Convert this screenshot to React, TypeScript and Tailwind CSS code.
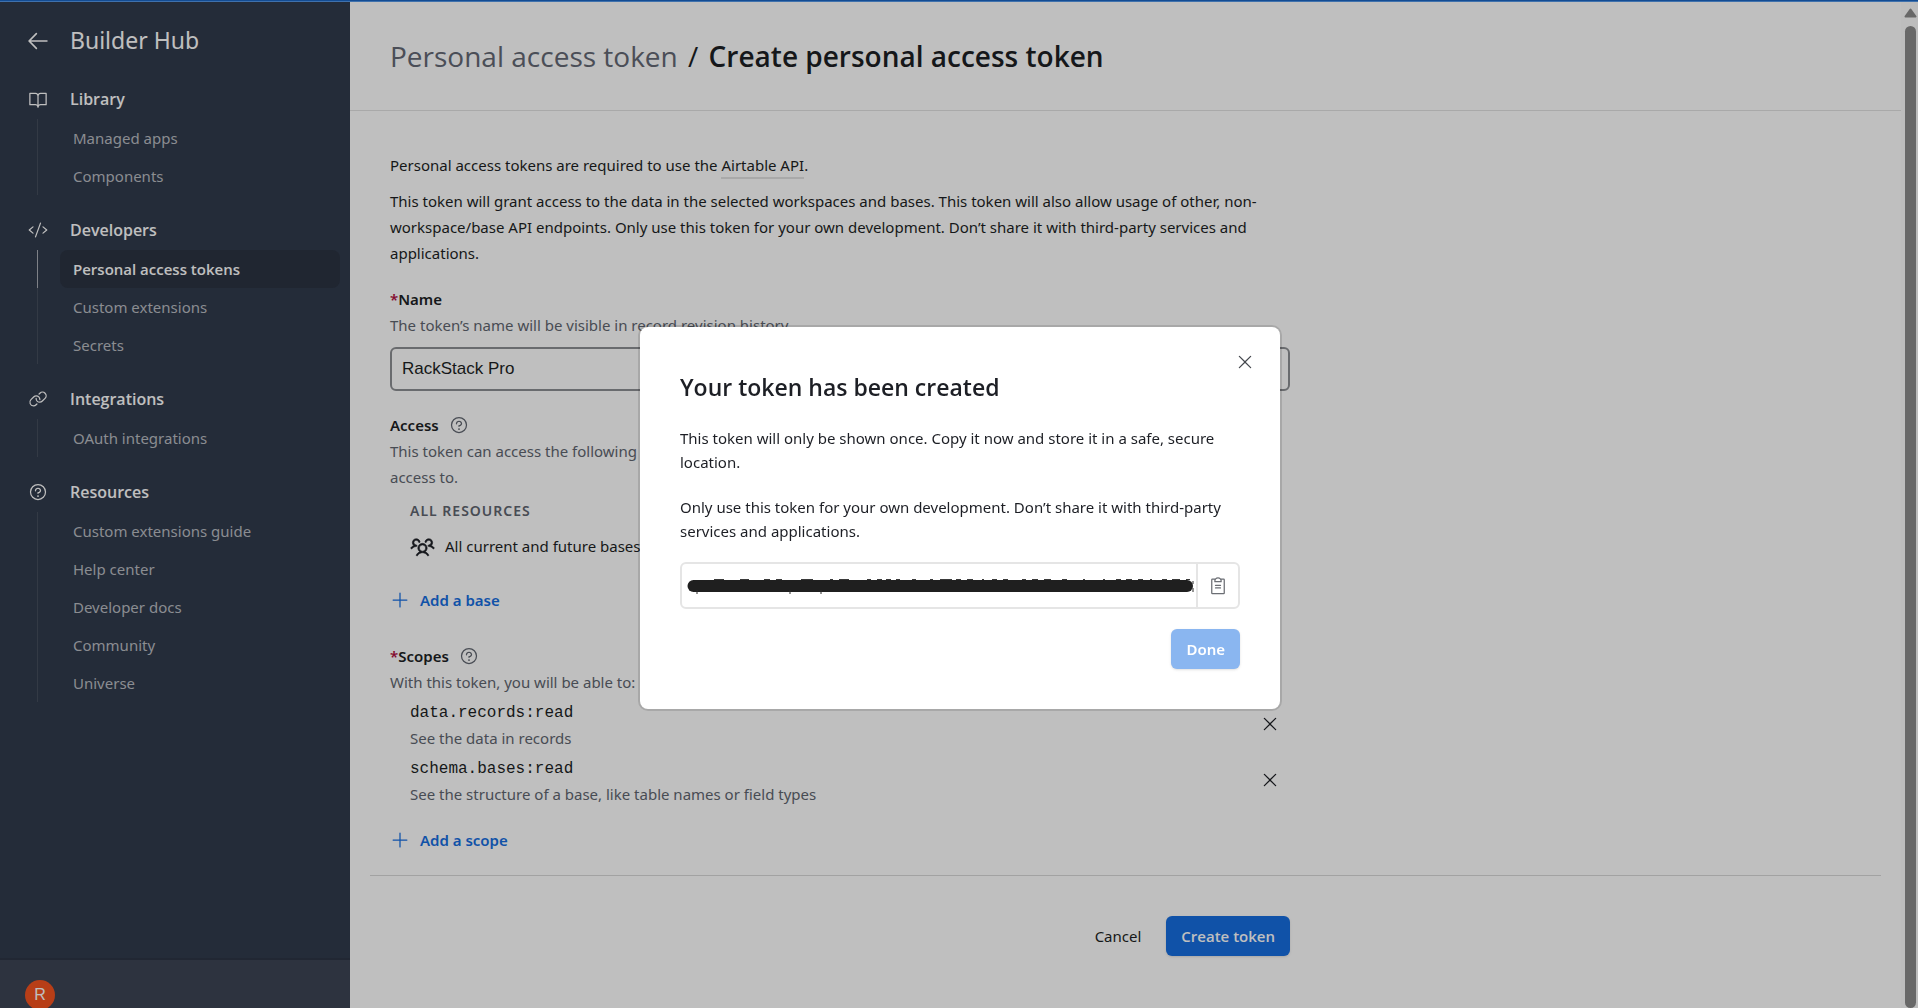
import type { ComponentType, ReactNode } from "react";
import {
  PiArrowLeft,
  PiBookOpen,
  PiClipboardText,
  PiCode,
  PiLink,
  PiPlus,
  PiQuestion,
  PiUsersThree,
  PiX,
} from "react-icons/pi";

type Icon = ComponentType<{ className?: string }>;

type Section = {
  title: string;
  icon: Icon;
  items: { label: string; active?: boolean }[];
};

const sections: Section[] = [
  {
    title: "Library",
    icon: PiBookOpen,
    items: [{ label: "Managed apps" }, { label: "Components" }],
  },
  {
    title: "Developers",
    icon: PiCode,
    items: [
      { label: "Personal access tokens", active: true },
      { label: "Custom extensions" },
      { label: "Secrets" },
    ],
  },
  {
    title: "Integrations",
    icon: PiLink,
    items: [{ label: "OAuth integrations" }],
  },
  {
    title: "Resources",
    icon: PiQuestion,
    items: [
      { label: "Custom extensions guide" },
      { label: "Help center" },
      { label: "Developer docs" },
      { label: "Community" },
      { label: "Universe" },
    ],
  },
];

const scopes = [
  { name: "data.records:read", description: "See the data in records" },
  {
    name: "schema.bases:read",
    description: "See the structure of a base, like table names or field types",
  },
];

function Sidebar() {
  return (
    <aside className="flex w-[350px] shrink-0 flex-col bg-[#313b4c] text-white">
      <div className="flex h-[77px] items-center pl-[25px]">
        <button type="button" aria-label="Back" className="flex">
          <PiArrowLeft className="size-[26px]" />
        </button>
        <h2 className="pl-[19px] text-[23px]">Builder Hub</h2>
      </div>
      <nav className="flex flex-1 flex-col gap-[15px]">
        {sections.map(({ title, icon: SectionIcon, items }) => (
          <section key={title}>
            <h3 className="flex h-10 items-center gap-[22px] pl-7 font-['Open_Sans','Segoe_UI',sans-serif] text-[16px] font-semibold">
              <SectionIcon className="size-5" />
              {title}
            </h3>
            <ul>
              {items.map(({ label, active }) => (
                <li
                  key={label}
                  className={
                    active
                      ? "ml-[37px] flex border-l border-[#a9adb5] pr-[10px] pl-[22px]"
                      : "ml-[37px] flex border-l border-[#454e5d] pr-[10px] pl-[22px]"
                  }
                >
                  <a
                    href="#"
                    className={
                      active
                        ? "flex h-[38px] flex-1 items-center rounded-lg bg-[#2b3342] pl-[13px] font-['Open_Sans','Segoe_UI',sans-serif] text-[15px] font-semibold"
                        : "flex h-[38px] flex-1 items-center rounded-lg pl-[13px] text-[15px] text-[#b9bcc2]"
                    }
                  >
                    {label}
                  </a>
                </li>
              ))}
            </ul>
          </section>
        ))}
      </nav>
      <div className="flex h-[50px] items-start border-t-2 border-[#2d3544] bg-[#3c4455] pt-5 pl-[25px]">
        <button
          type="button"
          aria-label="Account"
          className="flex size-[30px] shrink-0 items-center justify-center rounded-full bg-[#f5531f] font-['Liberation_Sans',Arial,sans-serif] text-[16px]"
        >
          R
        </button>
      </div>
    </aside>
  );
}

function AddButton({ children }: { children: ReactNode }) {
  return (
    <button type="button" className="flex items-center gap-[10px] font-semibold text-[#166ee1]">
      <PiPlus className="size-5" />
      {children}
    </button>
  );
}

function TokenForm() {
  return (
    <form className="px-5" onSubmit={(event) => event.preventDefault()}>
      <div className="max-w-[940px] px-5 pt-[41px] leading-[26px]">
        <p>
          Personal access tokens are required to use the{" "}
          <a href="#" className="border-b-2 border-[#e2e2e2] pb-[2px]">
            Airtable API
          </a>
          .
        </p>
        <p className="pt-[10px]">
          This token will grant access to the data in the selected workspaces and bases. This token
          will also allow usage of other, non-workspace/base API endpoints. Only use this token for
          your own development. Don’t share it with third-party services and applications.
        </p>

        <label htmlFor="token-name" className="mt-5 block font-semibold">
          <span className="text-[#b10f41]">*</span>Name
        </label>
        <p className="text-[#616670]">The token’s name will be visible in record revision history.</p>
        <input
          id="token-name"
          type="text"
          defaultValue="RackStack Pro"
          className="mt-[9px] block h-[44px] w-full rounded-md border-2 border-[#8d8f93] bg-white px-[10px] font-['Liberation_Sans',Arial,sans-serif] text-[17px]"
        />

        <div className="mt-[21px] flex items-center gap-[10px]">
          <h3 className="font-semibold">Access</h3>
          <PiQuestion className="size-5 text-[#616670]" />
        </div>
        <p className="text-[#616670]">
          This token can access the following
          <br />
          access to.
        </p>
        <div className="pl-5">
          <h4 className="pt-2 text-[14px] font-semibold tracking-[1px] text-[#616670]">
            ALL RESOURCES
          </h4>
          <div className="mt-[9px] flex items-center gap-[10px]">
            <PiUsersThree className="size-[25px] stroke-current stroke-[6]" />
            All current and future bases
          </div>
        </div>
        <div className="mt-7">
          <AddButton>Add a base</AddButton>
        </div>

        <div className="mt-[30px] flex items-center gap-[10px]">
          <h3 className="font-semibold">
            <span className="text-[#b10f41]">*</span>Scopes
          </h3>
          <PiQuestion className="size-5 text-[#616670]" />
        </div>
        <p className="text-[#616670]">With this token, you will be able to:</p>
        <ul className="pt-[6px] pl-5">
          {scopes.map(({ name, description }) => (
            <li
              key={name}
              className="flex h-14 items-start justify-between pr-[10px] leading-[25px]"
            >
              <div>
                <div className="font-['Liberation_Mono',monospace] text-[16px]">{name}</div>
                <p className="text-[#616670]">{description}</p>
              </div>
              <button type="button" aria-label="Remove scope" className="mt-[13px]">
                <PiX className="size-5" />
              </button>
            </li>
          ))}
        </ul>
        <div className="mt-[14px]">
          <AddButton>Add a scope</AddButton>
        </div>
      </div>

      <div className="mt-[22px] border-t border-[#d9d9d9]">
        <div className="flex max-w-[920px] items-center justify-end gap-[25px] pt-10">
          <button type="button">Cancel</button>
          <button
            type="submit"
            className="h-10 rounded-md bg-[#166ee1] px-[15px] font-['Open_Sans','Segoe_UI',sans-serif] font-semibold text-white shadow-sm"
          >
            Create token
          </button>
        </div>
      </div>
    </form>
  );
}

function TokenDialog() {
  return (
    <div className="fixed inset-0 flex items-center justify-center bg-black/25 pt-7 pl-[2px]">
      <div
        role="dialog"
        aria-labelledby="dialog-title"
        className="relative w-[640px] rounded-lg bg-white px-10 pt-[42px] pb-10 shadow-[0_0_0_2px_rgba(0,0,0,0.12)]"
      >
        <button type="button" aria-label="Close" className="absolute top-[25px] right-[25px]">
          <PiX className="size-5 text-[#45484e]" />
        </button>
        <h2
          id="dialog-title"
          className="font-['Open_Sans','Segoe_UI',sans-serif] text-[23px] leading-9 font-semibold"
        >
          Your token has been created
        </h2>
        <p className="pt-[21px] leading-6">
          This token will only be shown once. Copy it now and store it in a safe, secure location.
        </p>
        <p className="pt-[21px] leading-6">
          Only use this token for your own development. Don’t share it with third-party services and
          applications.
        </p>
        <div className="relative mt-[19px] flex h-[47px] rounded-md border-2 border-[#e5e5e5]">
          <input
            type="text"
            readOnly
            aria-label="Token"
            className="min-w-0 flex-1 px-2 outline-none"
          />
          <svg
            className="absolute top-[14px] left-1 h-4 w-[508px]"
            viewBox="0 0 508 16"
            aria-hidden="true"
          >
            <path d="M7.500 8H501" stroke="#1f1f1f" strokeWidth="12" strokeLinecap="round" />
            <path
              d="M11 12v4M104 12v4M135 12v4M507 3v3M507 10v4"
              stroke="#2b2b2b"
              strokeWidth="1"
            />
            <path
              d="M28 1.500h10M54 1.500h9M78 1.500h6M90 1.500h6M115 1.500h12M144 1.500h3M153 1.500h10M181 1.500h4M191 1.500h5M200 1.500h5M210 1.500h4M226 1.500h4M244 1.500h3M254 1.500h12M270 1.500h5M281 1.500h6M296 1.500h2M306 1.500h5M317 1.500h5M336 1.500h4M346 1.500h6M358 1.500h7M376 1.500h5M397 1.500h2M417 1.500h2M430 1.500h5M440 1.500h6M452 1.500h5M464 1.500h2M476 1.500h5M486 1.500h8M500 1.500h4"
              stroke="#3a3a3a"
            />
          </svg>
          <button
            type="button"
            aria-label="Copy token"
            className="flex w-[42px] items-center justify-center border-l-2 border-[#e5e5e5]"
          >
            <PiClipboardText className="size-5 text-[#6b6e74]" />
          </button>
        </div>
        <div className="flex justify-end pt-5">
          <button
            type="button"
            disabled
            className="h-10 rounded-md bg-[#8ab6f0] px-[15px] font-semibold text-white shadow-sm"
          >
            Done
          </button>
        </div>
      </div>
    </div>
  );
}

function Scrollbar() {
  return (
    <div
      className="flex w-[17px] shrink-0 flex-col items-center gap-2 bg-[#fcfcfc] pt-[6px] pl-[2px]"
      aria-hidden="true"
    >
      <svg className="h-[10px] w-[13px]" viewBox="0 0 13 10">
        <path
          d="M6.500 1.500L11.500 8.500H1.500Z"
          fill="#8b8b8b"
          stroke="#8b8b8b"
          strokeWidth="2"
          strokeLinejoin="round"
        />
      </svg>
      <div className="w-[11px] flex-1 rounded-full bg-[#8b8b8b]" />
    </div>
  );
}

export default function App() {
  return (
    <div className="flex h-screen flex-col overflow-hidden bg-white font-['Noto_Sans','Segoe_UI',sans-serif] text-[15px] text-[#1d1f25]">
      <div className="h-[2px] shrink-0 border-b border-[#5597e6] bg-[#1a66c4]" />
      <div className="flex min-h-0 flex-1">
        <Sidebar />
        <main className="min-w-0 flex-1">
          <header className="flex h-[109px] items-center border-b border-[#e2e2e2] px-10">
            <h1 className="font-['Open_Sans','Segoe_UI',sans-serif] text-[28px] font-semibold">
              <span className="font-normal text-[#646975]">Personal access token</span>
              <span className="px-[3px] font-normal"> / </span>
              Create personal access token
            </h1>
          </header>
          <TokenForm />
        </main>
        <Scrollbar />
      </div>
      <TokenDialog />
    </div>
  );
}
